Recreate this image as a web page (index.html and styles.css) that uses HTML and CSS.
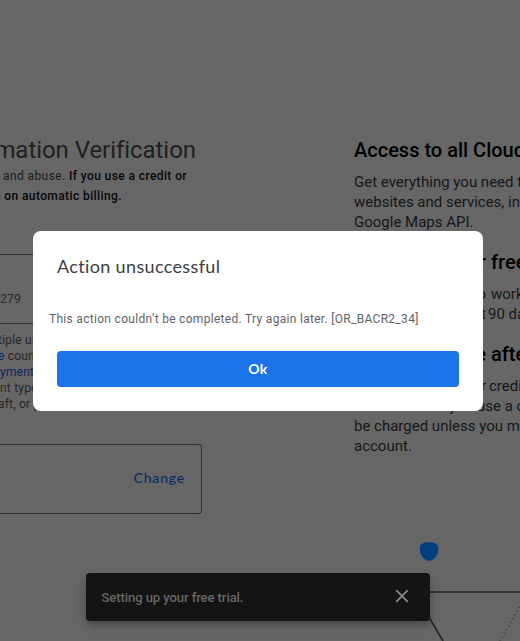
FILE: index.html
```html
<!DOCTYPE html>
<html lang="en">
<head>
<meta charset="utf-8">
<title>Free trial</title>
<link rel="stylesheet" href="styles.css">
</head>
<body>
<div class="page">
  <section class="verify">
    <h1 class="verify-title"><span>mation Verification</span></h1>
    <div class="intro intro-first"><span><span class="lead">and abuse. </span><b>If you use a credit or</b></span></div>
    <div class="intro intro-last"><span><b>n on automatic billing.</b></span></div>
    <div class="field"><span>279</span></div>
    <div class="hint">
      <div class="outdent">tiple us</div>
      <div class="outdent"><a>e</a> count</div>
      <div><a>yment</a></div>
      <div>nt type</div>
      <div class="outdent">aft, or p</div>
    </div>
    <div class="method"><span>Change</span></div>
  </section>
  <section class="benefits">
    <h2>Access to all Cloud</h2>
    <p>Get everything you need to<br>websites and services, inc<br>Google Maps API.</p>
    <h2 class="split"><span>r</span><span>free</span></h2>
    <p class="split"><span>to</span><span>work</span><span>t</span><span class="nudge">90 day</span></p>
    <h2 class="split"><span>e</span><span>after</span></h2>
    <p class="split"><span>r</span><span class="credit">credit</span><span class="you">you</span><span class="use">use a c</span></p>
    <p class="tail">be charged unless you ma<br>account.</p>
    <svg class="art" width="120" height="110" viewBox="400 531 120 110">
      <path d="M419.700 549C419.700 544 423 542.300 429 542.300S438.300 544 438.300 549C438.300 555 434 560.800 429 560.800S419.700 555 419.700 549Z" fill="#003f80"/>
      <path d="M425 592H520" stroke="#333" stroke-width="2"/>
      <path d="M427 614L443 641" stroke="#202020" stroke-width="1.500"/>
      <path d="M500 641L520 606" stroke="#353535" stroke-width="1.300" stroke-linecap="round" stroke-dasharray=".1 4.200"/>
    </svg>
  </section>
  <div class="dialog">
    <div class="dialog-title">Action unsuccessful</div>
    <div class="dialog-text">This action couldn’t be completed. Try again later. [OR_BACR2_34]</div>
    <button class="ok">Ok</button>
  </div>
  <div class="snackbar">
    <span>Setting up your free trial.</span>
    <svg width="14" height="14" viewBox="0 0 14 14"><path d="M1.200 0.200L12.800 11.800M12.800 0.200L1.200 11.800" stroke="#8b8b8b" stroke-width="1.800"/></svg>
  </div>
</div>
</body>
</html>
```

FILE: styles.css
```css
* { box-sizing: border-box; }
body { margin: 0; background: #666; font-family: Roboto, sans-serif; }
.page { position: relative; width: 520px; height: 641px; overflow: hidden; display: grid; grid-template-columns: 354px 166px; white-space: nowrap; }
h1, h2, p { margin: 0; }
.verify { padding-top: 136px; overflow: hidden; }
.verify-title, .intro { display: flex; justify-content: flex-end; }
.verify-title { width: 196px; height: 30px; font-size: 24px; line-height: 28px; font-weight: 400; color: #1f1f1f; letter-spacing: -0.05px; }
.intro { font-size: 12px; line-height: 20px; color: #1b1b1b; letter-spacing: 0.3px; }
.intro b { font-weight: 500; color: #080808; letter-spacing: 0.4px; }
.lead { letter-spacing: 0.4px; }
.intro-first { width: 187px; }
.intro-last { width: 122px; }
.field, .method { width: 202px; height: 70px; border: 1px solid #2f3030; border-left: 0; border-radius: 0 4px 4px 0; display: flex; align-items: center; }
.field { margin-top: 48px; padding-top: 19px; font-size: 12px; color: #29292b; letter-spacing: 0.3px; }
.hint { width: 37px; margin-top: 8px; font-size: 12px; line-height: 16px; color: #2a2727; letter-spacing: 0.2px; }
.hint .outdent { margin-left: -2px; }
.hint a { color: #0b2560; }
.method { margin-top: 32px; justify-content: flex-end; padding: 0 16px 3px 0; font: 500 14px Lato, sans-serif; color: #0a2d60; letter-spacing: 0.8px; }
.benefits { padding-top: 138px; overflow: hidden; color: #000; }
.benefits h2 { font-size: 20px; line-height: 24px; font-weight: 500; }
.benefits p { margin-top: 10px; font-size: 15px; line-height: 20px; color: #171717; }
.benefits p + h2 { margin-top: 18px; }
.benefits .split { display: grid; grid-template-columns: 132px 60px; column-gap: 5px; }
.split > span:nth-child(odd) { text-align: right; }
.benefits p.tail { margin-top: 0; }
.nudge { margin-left: -3px; }
.credit { margin-left: -2px; }
.you { padding-right: 13px; }
.use { margin-left: -14px; }
.art { display: block; margin: 75px 0 0 46px; }
.dialog { position: absolute; left: 33px; top: 231px; width: 450px; height: 180px; border-radius: 8px; background: #fff; padding: 23px 24px 24px; display: flex; flex-direction: column; }
.dialog-title { font: 400 18px/24px Lato, sans-serif; color: #3c4043; letter-spacing: 0.35px; }
.dialog-text { margin: 33px 0 0 -8px; height: 40px; font-size: 12px; line-height: 16px; color: #5f6368; letter-spacing: 0.3px; }
.ok { width: 402px; height: 36px; flex: none; border: 0; border-radius: 4px; background: #1a73e8; color: #fff; padding: 0 0 2px; font: 700 14px Lato, sans-serif; letter-spacing: 0.5px; }
.snackbar { position: absolute; left: 86px; top: 573px; width: 344px; height: 48px; border-radius: 4px; background: #141414; box-shadow: 0 3px 5px rgba(0,0,0,.16), 0 5px 12px rgba(0,0,0,.16); padding: 0 21px 0 15.500px; display: flex; align-items: center; justify-content: space-between; font-size: 13px; font-weight: 500; letter-spacing: -0.06px; color: #666; }
```
